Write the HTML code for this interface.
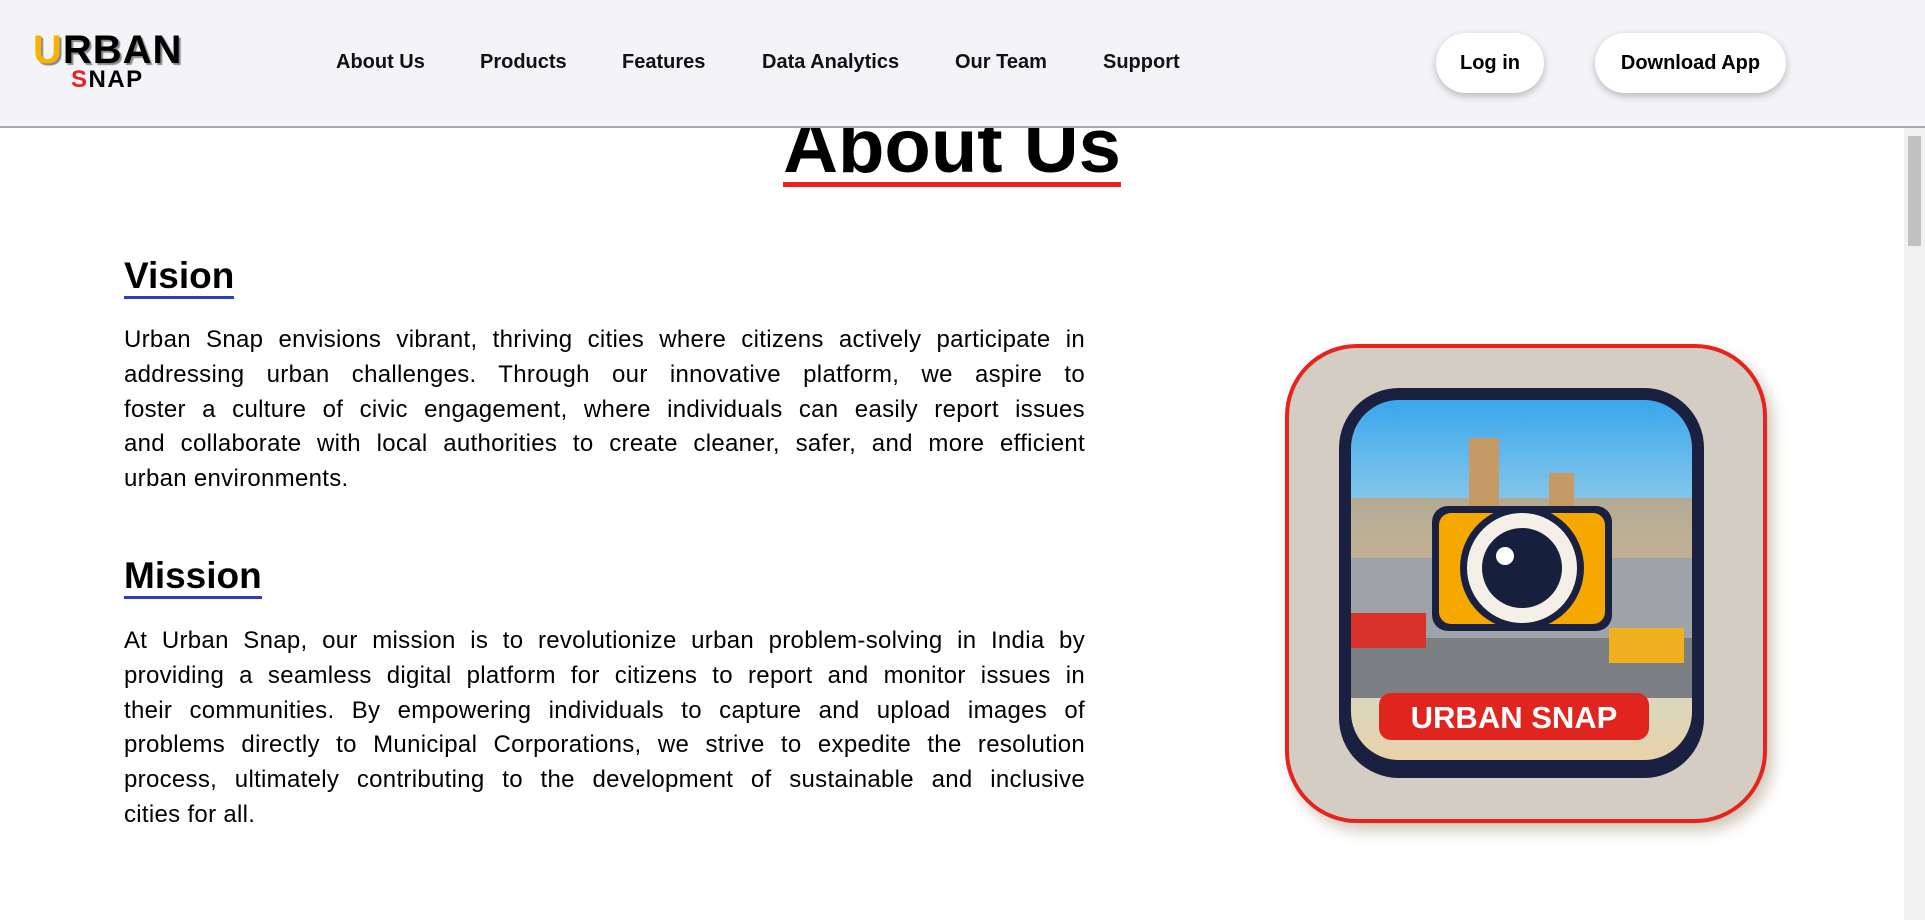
<!DOCTYPE html>
<html><head><meta charset="utf-8"><style>
*{margin:0;padding:0;box-sizing:border-box}
html,body{width:1925px;height:920px;overflow:hidden;background:#fff;font-family:"Liberation Sans",sans-serif;color:#000}
.hdr{position:absolute;left:0;top:0;width:1925px;height:128px;background:#f4f4f8;border-bottom:2px solid #a8a8a8;z-index:2}
.logo1{position:absolute;left:33px;top:28px;font-size:40px;font-weight:bold;letter-spacing:1px;text-shadow:2px 2px 1px #888}
.logo2{position:absolute;left:71px;top:66px;font-size:24px;font-weight:bold;letter-spacing:1.5px}
.nav a{position:absolute;top:51px;font-size:20px;font-weight:bold;color:#111;text-decoration:none}
.btn{position:absolute;top:33px;height:60px;background:#fff;border-radius:30px;box-shadow:0 3px 8px rgba(0,0,0,.25);font-size:20px;font-weight:bold;display:flex;align-items:center;justify-content:center}
.sb{position:absolute;left:1904px;top:128px;width:21px;height:792px;background:#f1f1f1}
.sb div{position:absolute;left:4px;top:8px;width:13px;height:110px;background:#c1c1c1}
h1{position:absolute;left:0;width:1904px;top:110px;text-align:center;font-size:76px;line-height:74px;font-weight:bold}
h1 span{border-bottom:5px solid #e8231e;display:inline-block;line-height:70px}
h2{position:absolute;left:124px;font-size:37px;font-weight:bold;line-height:40px;border-bottom:3px solid #2a3fc0}
.p{position:absolute;left:124px;width:961px;font-size:24px;letter-spacing:0.3px;line-height:34.8px}
.p div{text-align:justify;text-align-last:justify;white-space:nowrap;height:34.8px}
.p div.l{text-align-last:left}
.img{position:absolute;left:1285px;top:344px;width:482px;height:479px;border:4px solid #e8231e;border-radius:72px;background:#d4cdc3;overflow:hidden;box-shadow:6px 8px 14px rgba(120,100,60,.35)}
</style></head><body>
<div class="hdr">
<div class="logo1"><span style="color:#f5b400">U</span>RBAN</div>
<div class="logo2"><span style="color:#e8231e">S</span>NAP</div>
<div class="nav">
<a style="left:336px">About Us</a><a style="left:480px">Products</a><a style="left:622px">Features</a><a style="left:762px">Data Analytics</a><a style="left:955px">Our Team</a><a style="left:1103px">Support</a>
</div>
<div class="btn" style="left:1436px;width:108px">Log in</div>
<div class="btn" style="left:1595px;width:191px">Download App</div>
</div>
<div class="sb"><div></div></div>
<h1><span>About Us</span></h1>
<h2 style="top:256px">Vision</h2>
<div class="p" style="top:323px">
<div>Urban Snap envisions vibrant, thriving cities where citizens actively participate in</div>
<div>addressing urban challenges. Through our innovative platform, we aspire to</div>
<div>foster a culture of civic engagement, where individuals can easily report issues</div>
<div>and collaborate with local authorities to create cleaner, safer, and more efficient</div>
<div class="l">urban environments.</div>
</div>
<h2 style="top:556px">Mission</h2>
<div class="p" style="top:624px">
<div>At Urban Snap, our mission is to revolutionize urban problem-solving in India by</div>
<div>providing a seamless digital platform for citizens to report and monitor issues in</div>
<div>their communities. By empowering individuals to capture and upload images of</div>
<div>problems directly to Municipal Corporations, we strive to expedite the resolution</div>
<div>process, ultimately contributing to the development of sustainable and inclusive</div>
<div class="l">cities for all.</div>
</div>
<div class="img">
<svg width="474" height="471" viewBox="0 0 474 471">
<defs><linearGradient id="sky" x1="0" y1="0" x2="0" y2="1"><stop offset="0" stop-color="#3aa6ec"/><stop offset=".5" stop-color="#bfe0ea"/><stop offset="1" stop-color="#e8d2a8"/></linearGradient></defs>
<rect x="50" y="40" width="365" height="390" rx="60" fill="#1a2140"/>
<rect x="62" y="52" width="341" height="360" rx="48" fill="url(#sky)"/>
<rect x="62" y="150" width="341" height="130" fill="#c9a070" opacity=".7"/>
<rect x="180" y="90" width="30" height="100" fill="#c69a64"/>
<rect x="260" y="125" width="25" height="70" fill="#c69a64"/>
<rect x="62" y="210" width="341" height="100" fill="#9ea3a8"/>
<rect x="62" y="290" width="341" height="60" fill="#7c7f84"/>
<rect x="62" y="265" width="75" height="35" fill="#d8322a"/>
<rect x="320" y="280" width="75" height="35" fill="#f0b020"/>
<rect x="143" y="158" width="180" height="125" rx="16" fill="#1a2140"/>
<rect x="150" y="165" width="166" height="111" rx="12" fill="#f5a800"/>
<circle cx="233" cy="220" r="62" fill="#1a2140"/>
<circle cx="233" cy="220" r="55" fill="#f4f0e8"/>
<circle cx="233" cy="220" r="40" fill="#16203c"/>
<circle cx="216" cy="208" r="9" fill="#fff"/>
<rect x="90" y="345" width="270" height="47" rx="12" fill="#e0251e"/>
<text x="225" y="380" text-anchor="middle" font-family="Liberation Sans" font-weight="bold" font-size="31" fill="#fff">URBAN SNAP</text>
</svg>
</div>
</body></html>
